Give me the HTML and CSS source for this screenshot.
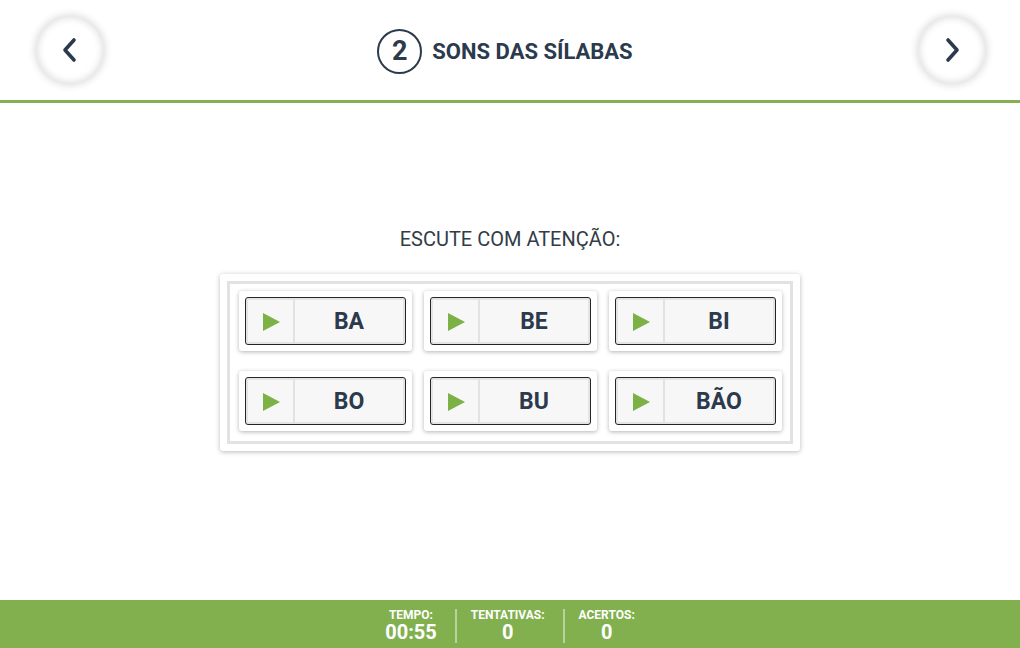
FILE: index.html
```html
<!DOCTYPE html>
<html lang="pt">
<head>
<meta charset="utf-8">
<title>Sons das sílabas</title>
<link rel="stylesheet" href="styles.css">
</head>
<body>
<div class="app">
  <header class="header">
    <button class="nav-btn" aria-label="Anterior">
      <svg width="20" height="26" viewBox="0 0 20 26"><path d="M14 3 L5 13 L14 23" fill="none" stroke="#2b3a4c" stroke-width="3.6" stroke-linecap="round" stroke-linejoin="round"/></svg>
    </button>
    <div class="title">
      <span class="step">2</span>
      <span class="title-text">SONS DAS SÍLABAS</span>
    </div>
    <button class="nav-btn" aria-label="Próximo">
      <svg width="20" height="26" viewBox="0 0 20 26"><path d="M6 3 L15 13 L6 23" fill="none" stroke="#2b3a4c" stroke-width="3.6" stroke-linecap="round" stroke-linejoin="round"/></svg>
    </button>
  </header>

  <main class="main">
    <p class="instruction">ESCUTE COM ATENÇÃO:</p>
    <div class="panel">
      <div class="frame">
        <div class="card"><div class="sbtn"><span class="play"></span><span class="syl">BA</span></div></div>
        <div class="card"><div class="sbtn"><span class="play"></span><span class="syl">BE</span></div></div>
        <div class="card"><div class="sbtn"><span class="play"></span><span class="syl">BI</span></div></div>
        <div class="card"><div class="sbtn"><span class="play"></span><span class="syl">BO</span></div></div>
        <div class="card"><div class="sbtn"><span class="play"></span><span class="syl">BU</span></div></div>
        <div class="card"><div class="sbtn"><span class="play"></span><span class="syl">BÃO</span></div></div>
      </div>
    </div>
  </main>

  <footer class="footer">
    <div class="stat"><span class="label">TEMPO:</span><span class="value">00:55</span></div>
    <span class="sep"></span>
    <div class="stat"><span class="label">TENTATIVAS:</span><span class="value">0</span></div>
    <span class="sep"></span>
    <div class="stat"><span class="label">ACERTOS:</span><span class="value">0</span></div>
  </footer>
</div>
</body>
</html>
```

FILE: styles.css
```css
* { box-sizing: border-box; }
html, body { margin: 0; padding: 0; }
body {
  width: 1020px;
  height: 648px;
  overflow: hidden;
  background: #fff;
  font-family: Roboto, "Liberation Sans", Arial, sans-serif;
  color: #2b3a4c;
}
.app {
  display: flex;
  flex-direction: column;
  height: 648px;
}
.header {
  height: 103px;
  border-bottom: 3px solid #84b250;
  display: flex;
  align-items: center;
  justify-content: space-between;
  padding: 0 34px 3px 36px;
  flex-shrink: 0;
}
.nav-btn {
  width: 68px;
  height: 68px;
  border-radius: 50%;
  border: none;
  background: #fff;
  box-shadow: 0 0 7px 2px rgba(0,0,0,0.12), inset 0 0 7px 2px rgba(0,0,0,0.12);
  display: flex;
  align-items: center;
  justify-content: center;
  padding: 0;
  margin-top: 2px;
}
.title {
  display: flex;
  align-items: center;
  gap: 10px;
  margin: 5px 12px 0 0;
}
.step {
  width: 45px;
  height: 45px;
  border: 2px solid #2b3a4c;
  border-radius: 50%;
  display: flex;
  align-items: center;
  justify-content: center;
  font-size: 27px;
  font-weight: 700;
  line-height: 1;
}
.title-text {
  font-size: 22px;
  font-weight: 700;
}
.main {
  flex: 1;
  display: flex;
  flex-direction: column;
  align-items: center;
  padding-top: 125px;
}
.instruction {
  margin: 0 0 24px;
  font-size: 20px;
  line-height: 22px;
  color: #323c47;
}
.panel {
  width: 580px;
  background: #fff;
  border-radius: 3px;
  padding: 7px;
  box-shadow: 0 1px 5px rgba(0,0,0,0.28);
}
.frame {
  border: 3px solid #e2e2e2;
  display: grid;
  grid-template-columns: repeat(3, 173px);
  column-gap: 12px;
  row-gap: 20px;
  justify-content: center;
  padding: 7px 8px 10px 9px;
}
.card {
  height: 60px;
  background: #fff;
  border-radius: 3px;
  padding: 6px;
  box-shadow: 0 1px 4px rgba(0,0,0,0.3);
}
.sbtn {
  height: 48px;
  border: 1px solid #2b2323;
  border-radius: 3px;
  background: #f7f7f7;
  box-shadow: inset 0 0 0 2px #e4e4e4;
  display: flex;
  align-items: stretch;
}
.play {
  width: 49px;
  border-right: 2px solid #e2e2e2;
  position: relative;
  flex-shrink: 0;
}
.play::before {
  content: "";
  position: absolute;
  left: 17px;
  top: 15px;
  border-left: 17px solid #7cb145;
  border-top: 9px solid transparent;
  border-bottom: 9px solid transparent;
}
.syl {
  flex: 1;
  display: flex;
  align-items: center;
  justify-content: center;
  font-size: 23px;
  font-weight: 700;
  color: #2b3a4c;
  padding-right: 2px;
}
.footer {
  height: 48px;
  background: #82b04f;
  display: flex;
  justify-content: center;
  align-items: center;
  color: #fff;
  flex-shrink: 0;
  padding: 4px 0 0 4px;
}
.stat {
  display: flex;
  flex-direction: column;
  align-items: center;
  padding: 0 18px 0 14px;
}
.label {
  font-size: 12px;
  font-weight: 700;
  line-height: 13px;
}
.value {
  font-size: 20px;
  font-weight: 700;
  line-height: 21px;
}
.sep {
  width: 2px;
  height: 34px;
  background: rgba(255,255,255,0.45);
}
```
